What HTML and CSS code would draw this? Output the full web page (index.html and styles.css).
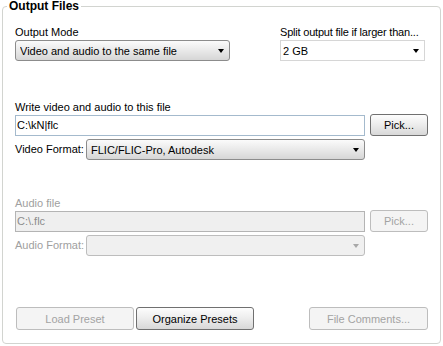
FILE: index.html
```html
<!DOCTYPE html>
<html>
<head>
    <link rel="stylesheet" href="styles.css">
</head>
<body>
    <fieldset class="group">
        <legend>Output Files</legend>

        <div class="top-row">
            <div class="field mode">
                <label>Output Mode</label>
                <div class="combo themed">
                    <span class="combo-text">Video and audio to the same file</span>
                    <span class="arrow"></span>
                </div>
            </div>
            <div class="field split">
                <label>Split output file if larger than...</label>
                <div class="combo plain">
                    <span class="combo-text">2 GB</span>
                    <span class="arrow"></span>
                </div>
            </div>
        </div>

        <label class="section-label">Write video and audio to this file</label>
        <div class="file-row">
            <div class="textbox">C:\kN|flc</div>
            <button class="btn pick">Pick...</button>
        </div>
        <div class="format-row">
            <span class="format-label">Video Format:</span>
            <div class="combo themed format">
                <span class="combo-text">FLIC/FLIC-Pro, Autodesk</span>
                <span class="arrow"></span>
            </div>
        </div>

        <label class="section-label audio disabled-text">Audio file</label>
        <div class="file-row">
            <div class="textbox disabled">C:\.flc</div>
            <button class="btn pick" disabled>Pick...</button>
        </div>
        <div class="format-row">
            <span class="format-label disabled-text">Audio Format:</span>
            <div class="combo disabled format">
                <span class="combo-text"></span>
                <span class="arrow"></span>
            </div>
        </div>

        <div class="button-row">
            <button class="btn wide first" disabled>Load Preset</button>
            <button class="btn wide">Organize Presets</button>
            <button class="btn wide last" disabled>File Comments...</button>
        </div>
    </fieldset>
</body>
</html>
```

FILE: styles.css
```css
* {
    box-sizing: border-box;
    margin: 0;
    padding: 0;
}

body {
    font-family: "Liberation Sans", Arial, sans-serif;
    font-size: 11px;
    color: #000;
    background: #fff;
    padding: 0 2px;
}

.group {
    width: 439px;
    height: 344px;
    border: 1px solid #d2d4d0;
    border-radius: 4px;
    padding: 14px 12px 0 12px;
}

.group legend {
    font-size: 12px;
    font-weight: bold;
    line-height: 12px;
    margin-left: -8px;
    padding: 0 2px;
}

label {
    display: block;
    line-height: 13px;
    margin-bottom: 1px;
    white-space: nowrap;
}

.top-row {
    display: flex;
    gap: 50px;
}

.mode {
    width: 215px;
}

.split {
    width: 145px;
}

.split label {
    letter-spacing: -0.2px;
}

.combo {
    display: flex;
    align-items: center;
    height: 21px;
    border-radius: 3px;
    padding-left: 4px;
}

.combo-text {
    flex: 1;
    white-space: nowrap;
    overflow: hidden;
}

.arrow {
    width: 0;
    height: 0;
    border-left: 3.5px solid transparent;
    border-right: 3.5px solid transparent;
    border-top: 4px solid #000;
    margin-right: 5px;
}

.themed {
    border: 1px solid #8c8c8c;
    background: linear-gradient(#fbfbfb, #e9e9e9 50%, #d6d6d6);
}

.plain {
    border: 1px solid #d6d6d6;
    border-radius: 0;
    background: #fff;
    padding-left: 2px;
}

.section-label {
    margin-top: 40px;
    margin-bottom: 0;
}

.section-label.audio {
    margin-top: 37px;
}

.file-row {
    display: flex;
    align-items: flex-start;
    gap: 5px;
}

.textbox {
    width: 350px;
    height: 21px;
    margin-top: 1px;
    border: 1px solid #a4bacd;
    background: #fff;
    padding: 3px 1px;
    line-height: 13px;
}

.textbox.disabled {
    border-color: #b4b4b4;
    background: #efefef;
    color: #8c8c8c;
}

.btn {
    font-family: inherit;
    font-size: 11px;
    color: #000;
    height: 22px;
    border: 1px solid #707070;
    border-radius: 3px;
    background: linear-gradient(#fdfdfd, #ececec 50%, #d8d8d8);
}

.btn:disabled {
    color: #a3a3a3;
    border-color: #bdbdbd;
    background: #f4f4f4;
}

.pick {
    width: 58px;
}

.format-row {
    display: flex;
    align-items: center;
    margin-top: 3px;
}

.format-label {
    width: 71px;
    line-height: 13px;
}

.format {
    width: 279px;
}

.combo.disabled {
    border: 1px solid #bdbdbd;
    background: #f0f0f0;
}

.combo.disabled .arrow {
    border-top-color: #a8a8a8;
}

.disabled-text {
    color: #a0a0a0;
}

.button-row {
    display: flex;
    gap: 2px;
    margin-top: 51px;
}

.wide {
    width: 118px;
    height: 23px;
}

.first {
    margin-left: 1px;
}

.last {
    width: 119px;
    margin-left: auto;
}
```
